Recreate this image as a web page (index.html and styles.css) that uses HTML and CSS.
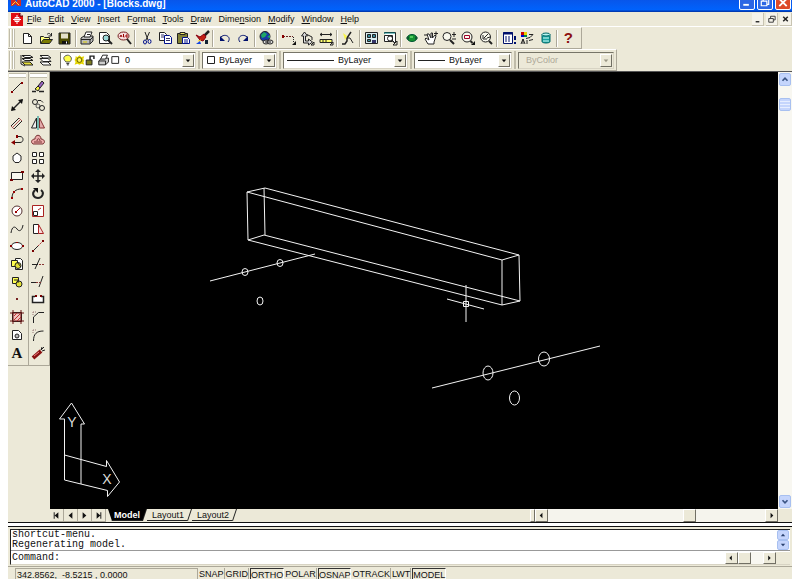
FILE: index.html
```html
<!DOCTYPE html>
<html lang="en">
<head>
<meta charset="utf-8">
<title>AutoCAD 2000 - [Blocks.dwg]</title>
<link rel="stylesheet" href="styles.css">
</head>
<body>
<div class="app">
  <header class="title">
    <svg class="logo" viewBox="0 0 12 12"><path d="M1 3h4l2 4 2-5 3 1v8H8L6 9l-3 2H1z" fill="#d42b20"/><path d="M2 10l4-4 4 4" stroke="#ffe14a" fill="none"/></svg>
    <span class="title-text">AutoCAD 2000 - [Blocks.dwg]</span>
    <div class="wins">
      <button class="win" aria-label="Minimize"><svg viewBox="0 0 14 14"><path d="M3 9.5h6" stroke="#fff" stroke-width="2"/></svg></button>
      <button class="win" aria-label="Restore"><svg viewBox="0 0 14 14"><path d="M5 5V3h6v6H9M3 5.500h6v5H3z" stroke="#fff" stroke-width="1.300" fill="none"/></svg></button>
      <button class="win close" aria-label="Close"><svg viewBox="0 0 14 14"><path d="M3 3l8 8M11 3l-8 8" stroke="#fff" stroke-width="2"/></svg></button>
    </div>
  </header>

  <nav class="menu">
    <svg class="doc" viewBox="0 0 12 13"><path d="M0 0h9l3 3v10H0z" fill="#e00d12"/><path d="M9 0v3h3" fill="#fff" stroke="#500"/><path d="M6 2v9M2 6.500h8M4 4.500h4v4H4z" stroke="#fff" fill="none"/></svg>
    <button><u>F</u>ile</button><button><u>E</u>dit</button><button><u>V</u>iew</button><button><u>I</u>nsert</button><button>F<u>o</u>rmat</button><button><u>T</u>ools</button><button><u>D</u>raw</button><button>Dime<u>n</u>sion</button><button><u>M</u>odify</button><button><u>W</u>indow</button><button><u>H</u>elp</button>
    <div class="mdi">
      <button aria-label="Minimize drawing"><svg viewBox="0 0 12 12"><path d="M4 9h4" stroke="#222" stroke-width="1.500"/></svg></button>
      <button aria-label="Restore drawing"><svg viewBox="0 0 12 12"><path d="M5 5V3h5v4H8M3 5.500h5v4H3z" stroke="#333" fill="none"/></svg></button>
      <button aria-label="Close drawing"><svg viewBox="0 0 12 12"><path d="M3.500 3.500l5 5M8.500 3.500l-5 5" stroke="#222" stroke-width="1.600"/></svg></button>
    </div>
  </nav>

  <div class="bars">
    <div class="bar standard">
      <i class="grip"></i>
      <button class="t" aria-label="New"><svg viewBox="0 0 16 16"><path d="M4.500 3.500h5l3 3v7h-8z" fill="#fff"/><path d="M9.500 3.500v3h3"/></svg></button>
      <button class="t" aria-label="Open"><svg viewBox="0 0 16 16"><path d="M2.500 13V6.500h3l1 1h5v2" fill="#ffff80"/><path d="M2.500 13.500l3-4h9l-3 4z" fill="#7c7c00"/><path d="M9 4.500c2-2 3-1 4 1M13.500 3v3h-3"/></svg></button>
      <button class="t" aria-label="Save"><svg viewBox="0 0 16 16"><path d="M3 3h11v11H3z" fill="#4c4c00"/><path d="M5 3.500h7v5H5z" fill="#e4e1c8" stroke="none"/><path d="M6 11h6v3H6z" fill="#111" stroke="none"/><path d="M10 11.500h1v2h-1z" fill="#fff" stroke="none"/></svg></button>
      <i class="sep"></i>
      <button class="t" aria-label="Print"><svg viewBox="0 0 16 16"><path d="M2 8l3-2h9v5l-3 3H2z" fill="#bbb"/><path d="M5 7l2-5h6l-2 5z" fill="#fff"/><path d="M2 9.500h9v4M11 10l3-3M8 4.500h3"/><path d="M4 12h4" stroke="#dc0"/></svg></button>
      <button class="t" aria-label="Print preview"><svg viewBox="0 0 16 16"><path d="M2.500 2.500h7l3 3v8h-10z" fill="#fff"/><circle cx="9" cy="8" r="3" fill="#9cd8d8"/><path d="M11 10l4 4" stroke-width="2"/></svg></button>
      <button class="t" aria-label="Find and replace"><svg viewBox="0 0 16 16"><ellipse cx="7.500" cy="6" rx="5.500" ry="4" fill="#f6dede" stroke="#722"/><path d="M11 9l4 5" stroke-width="2"/><path d="M4 7l1-2 1 2M7.500 4v3h1M12 5h-2v2h2" stroke="#900"/></svg></button>
      <i class="sep"></i>
      <button class="t" aria-label="Cut"><svg viewBox="0 0 16 16"><path d="M6 2l3 8M10.500 2L7 10"/><ellipse cx="6" cy="12" rx="1.500" ry="2" stroke="#00108c"/><ellipse cx="10.500" cy="11.500" rx="1.500" ry="2" stroke="#00108c"/></svg></button>
      <button class="t" aria-label="Copy"><svg viewBox="0 0 16 16"><path d="M2.500 2.500h5l2 2v6h-7z" fill="#fff"/><path d="M7.500 5.500h5l2 2v6h-7z" fill="#fff" stroke="#00108c"/><path d="M4 5h3M4 7h3M9 8.500h4M9 10.500h4" stroke="#336"/></svg></button>
      <button class="t" aria-label="Paste"><svg viewBox="0 0 16 16"><path d="M2.500 3.500h10v10h-10z" fill="#808036"/><path d="M5 2.500h5v2H5z" fill="#eee36a"/><path d="M7.500 7.500h5l2 2v4h-7z" fill="#fff" stroke="#00108c"/><path d="M9 10h4M9 12h4" stroke="#00108c"/></svg></button>
      <button class="t" aria-label="Match properties"><svg viewBox="0 0 16 16"><path d="M15 1l-5 5" stroke-width="2.500"/><path d="M2 5l4 2 4-3 2 3-3 4-3-1z" fill="#c32114" stroke="#801"/><path d="M2 14l4-3 1 3z" fill="#1446e0" stroke="none"/><path d="M11 10h3v4h-3z" fill="#123" stroke="none"/><path d="M4 11l3-1" stroke="#ffd628"/></svg></button>
      <i class="sep"></i>
      <button class="t" aria-label="Undo"><svg viewBox="0 0 16 16"><path d="M4 7c4-4 11 0 7 5" stroke="#00106c"/><path d="M3 6v5h5z" fill="#00106c" stroke="none"/></svg></button>
      <button class="t" aria-label="Redo"><svg viewBox="0 0 16 16"><path d="M12 7C8 3 1 7 5 12" stroke="#00106c"/><path d="M13 6v5H8z" fill="#00106c" stroke="none"/></svg></button>
      <i class="sep"></i>
      <button class="t" aria-label="Insert hyperlink"><svg viewBox="0 0 16 16"><circle cx="7" cy="6.500" r="5" fill="#1838a8"/><path d="M3 5l3-3 3 2-2 3-3 1zM9 7l3-2v3z" fill="#20a864" stroke="none"/><ellipse cx="8" cy="12" rx="3" ry="2" fill="#ddd"/><ellipse cx="12" cy="12" rx="3" ry="2" fill="#ddd"/><path d="M7 12h6"/></svg></button>
      <i class="sep"></i>
      <button class="t" aria-label="Tracking"><svg viewBox="0 0 16 16"><path d="M2 6.500h10" stroke="#622" stroke-dasharray="2 1"/><path d="M12.500 7v5" stroke-dasharray="1 1"/><path d="M1 5h2v3H1z" fill="#800" stroke="none"/><path d="M15 11v4h-4z" fill="#111" stroke="none"/></svg></button>
      <button class="t" aria-label="UCS"><svg viewBox="0 0 16 16"><path d="M4.500 13V6h-2l3-4 3 4h-2v5h3V9l4 3-4 3v-2z" fill="#ddd"/><path d="M8 4.500l5 2.500v3M15 12v3h-3z"/></svg></button>
      <button class="t" aria-label="Distance"><svg viewBox="0 0 16 16"><path d="M2 4.500h12M4 3L2 4.500 4 6M12 3l2 1.500L12 6"/><path d="M2 9.500h12v3H2z" fill="#ffff70"/><path d="M5 10v2M8 10v2M15 12v3h-3z"/></svg></button>
      <i class="sep"></i>
      <button class="t" aria-label="Redraw all"><svg viewBox="0 0 16 16"><path d="M11 2l-4 6v3l-2 3H2" stroke-width="1.500"/><path d="M3 3l4 3-2 4z" fill="#f8f44a" stroke="none"/><path d="M7 8h3l3 5"/></svg></button>
      <i class="sep"></i>
      <button class="t" aria-label="Aerial view"><svg viewBox="0 0 16 16"><path d="M2.500 2.500h12v11h-12z" fill="#d9eef0"/><path d="M4.500 4.500h3v3h-3zM9.500 4.500h3v3h-3zM4.500 9.500h3v2h-3z" fill="#378b9a"/><path d="M9 10h4v3H9z" fill="#336" stroke="none"/></svg></button>
      <button class="t" aria-label="Named views"><svg viewBox="0 0 16 16"><path d="M2.500 3.500v-1h11v10h-2M2.500 5.500h8v6h-8z" fill="#fff"/><path d="M2 3h11" stroke="#008080"/><circle cx="8" cy="8.500" r="2.500"/><path d="M10 10l2 2M15 11v4h-4z"/></svg></button>
      <i class="sep"></i>
      <button class="t" aria-label="3D orbit"><svg viewBox="0 0 16 16"><ellipse cx="8" cy="8" rx="5" ry="3.500" fill="#149330" stroke="#053"/><path d="M2 8l3-2v4zM14 8l-3-2v4z" fill="#153" stroke="none"/><path d="M6 7h3" stroke="#8fff8a"/></svg></button>
      <button class="t" aria-label="Pan"><svg viewBox="0 0 16 16"><path d="M5 14L2 9l1-1 3 2-2-6h2l2 4V3h1.500v5L12 5l1 1-2 6v2z" fill="#fff"/><path d="M11 3.500h4M13 1.500v4M1 5h3"/></svg></button>
      <button class="t" aria-label="Zoom realtime"><svg viewBox="0 0 16 16"><circle cx="6" cy="6.500" r="4" fill="#f8f8ee"/><path d="M9 10l4 4" stroke-width="2"/><path d="M13 2v5M11 4.500h4M11 9h4"/></svg></button>
      <button class="t" aria-label="Zoom window"><svg viewBox="0 0 16 16"><circle cx="7" cy="7" r="5" fill="#f8f8ee"/><path d="M4.500 5.500h5v3h-5z" stroke="#a00028"/><path d="M10.500 11l2 2" stroke-width="2"/><path d="M15 11v4h-4z" fill="#111" stroke="none"/></svg></button>
      <button class="t" aria-label="Zoom previous"><svg viewBox="0 0 16 16"><circle cx="7.500" cy="7" r="5" fill="#f8f8ee"/><path d="M11 11l3 3" stroke-width="2"/><path d="M10 4L6 8M5 5v4h4M12 7l-3 1"/></svg></button>
      <i class="sep"></i>
      <button class="t" aria-label="Properties"><svg viewBox="0 0 16 16"><path d="M2.500 2.500h9v11h-9z" fill="#fff" stroke="#00106c"/><path d="M2 3.500h10" stroke="#00106c" stroke-width="2"/><path d="M4 7h6M4 9h6M4 11h6" stroke="#00106c" stroke-dasharray="2 1"/><path d="M14 6v4M14 12v2" stroke="#00106c" stroke-width="2"/></svg></button>
      <button class="t" aria-label="DesignCenter"><svg viewBox="0 0 16 16"><path d="M2 2h3v3H2z" fill="#c00" stroke="none"/><path d="M5 2h3v3H5z" fill="#e8d000" stroke="none"/><path d="M2 5h3v2H2z" fill="#00c" stroke="none"/><path d="M5 5h3v2H5z" fill="#084" stroke="none"/><path d="M10 4.500h4l-3 3-4 1M4 9v5M2 14l2-5 2 5M8 10v4M10 10.500l4-1"/></svg></button>
      <button class="t" aria-label="dbConnect"><svg viewBox="0 0 16 16"><path d="M4 4.500v7c0 2 8 2 8 0v-7" fill="#18a3a0" stroke="#066"/><ellipse cx="8" cy="4.500" rx="4" ry="1.500" fill="#b6f4ef" stroke="#066"/><path d="M5 8h6M5 11h6" stroke="#d6fffa"/></svg></button>
      <i class="sep"></i>
      <button class="t help" aria-label="Help">?</button>
    </div>

    <div class="bar props">
      <i class="grip"></i>
      <button class="t" aria-label="Make object's layer current"><svg viewBox="0 0 16 16"><path d="M3 3.500h8l3 2H6zM3 6.500h8l3 2H6z" fill="#fff"/><path d="M3 10h8l3 3H6z" fill="#e6de38"/><path d="M2 3v9l4 2"/></svg></button>
      <button class="t" aria-label="Layers"><svg viewBox="0 0 16 16"><path d="M3 3.500h8l3 2.500H6zM3 6.500h8l3 3H6zM3 10h8l3 3H6z" fill="#fff"/></svg></button>
      <label class="combo layer">
        <svg class="states" viewBox="0 0 62 14">
          <path d="M4 9C-1 4 4 2 6 2s6 3 2 7z" fill="#ffff48" stroke="#555"/><path d="M4.500 10.500h3M5 12h2"/>
          <path d="M14 3l2 1 2-2 2 2 3-1-1 3 1 2-1 1 1 3-3-1-2 1-2-1-3 1 1-3-1-2 1-2z" fill="#e5d600" stroke="none"/><circle cx="18" cy="7" r="2.500" fill="#fff75c" stroke="#665c00"/>
          <path d="M25 7h6v5h-6z" fill="#7a7a20"/><path d="M29 7V3h4v3" stroke-width="1.500"/>
          <path d="M38 8l3-3h7v4l-3 3h-7z" fill="#ccc"/><path d="M40 6l2-4h5l-2 4z" fill="#fff"/><path d="M38 8h7v4"/>
          <path d="M51.500 3.500h7v7h-7z" fill="#fff"/>
        </svg>
        <select aria-label="Layer"><option>0</option></select>
        <svg class="arrow" viewBox="0 0 11 12"><path d="M3 5h5L5.500 8z"/></svg>
      </label>
      <i class="grip slim"></i>
      <label class="combo color">
        <svg class="swatch" viewBox="0 0 12 14"><path d="M3.500 3.500h7v7h-7z" fill="#fff"/></svg>
        <select aria-label="Color"><option>ByLayer</option></select>
        <svg class="arrow" viewBox="0 0 11 12"><path d="M3 5h5L5.500 8z"/></svg>
      </label>
      <i class="grip slim"></i>
      <label class="combo ltype">
        <span class="rule long"></span>
        <select aria-label="Linetype"><option>ByLayer</option></select>
        <svg class="arrow" viewBox="0 0 11 12"><path d="M3 5h5L5.500 8z"/></svg>
      </label>
      <i class="grip slim"></i>
      <label class="combo weight">
        <span class="rule"></span>
        <select aria-label="Lineweight"><option>ByLayer</option></select>
        <svg class="arrow" viewBox="0 0 11 12"><path d="M3 5h5L5.500 8z"/></svg>
      </label>
      <i class="grip slim"></i>
      <label class="combo off">
        <select aria-label="Plot style" disabled><option>ByColor</option></select>
        <svg class="arrow" viewBox="0 0 11 12"><path d="M3 5h5L5.500 8z"/></svg>
      </label>
    </div>
  </div>

  <main class="work">
    <aside class="dock">
      <div class="palette">
        <i class="grip flat"></i>
        <button class="v" aria-label="Line"><svg viewBox="0 0 16 16"><path d="M4 12l8-8"/><path d="M2 12h2v2H2zM12 3h2v2h-2z" fill="#800" stroke="none"/></svg></button>
        <button class="v" aria-label="Construction line"><svg viewBox="0 0 16 16"><path d="M3 13L13 3" stroke-width="1.500"/><path d="M2 14l1-5 4 4zM14 2l-1 5-4-4z" fill="#111" stroke="none"/></svg></button>
        <button class="v" aria-label="Multiline"><svg viewBox="0 0 16 16"><path d="M2 11l8-8M5 14l8-8"/><path d="M2 11l3 3M10 3l3 3M4 12l8-8" stroke="#a55"/></svg></button>
        <button class="v" aria-label="Polyline"><svg viewBox="0 0 16 16"><path d="M8 4.500h3c4 0 4 6 0 6H4"/><path d="M7 3h2v3H7zM6 8v5l-4-2.500z" fill="#800" stroke="none"/></svg></button>
        <button class="v" aria-label="Polygon"><svg viewBox="0 0 16 16"><path d="M8 3l4 3v4l-2 2.500H6L4 10V6z" fill="#fff"/></svg></button>
        <button class="v" aria-label="Rectangle"><svg viewBox="0 0 16 16"><path d="M2.500 4.500h11v7h-11z" fill="#f8f7ee"/><path d="M1 11h3v2H1zM12 3h3v2h-3z" fill="#700" stroke="none"/></svg></button>
        <button class="v" aria-label="Arc"><svg viewBox="0 0 16 16"><path d="M3 13c0-6 4-9 9-9"/><path d="M2 12h2v2H2zM4 6h2v2H4zM12 3h2v2h-2z" fill="#900" stroke="none"/></svg></button>
        <button class="v" aria-label="Circle"><svg viewBox="0 0 16 16"><circle cx="8" cy="8" r="5" fill="#fff" stroke="#533"/><path d="M7 9l4-4" stroke="#a00"/><path d="M6 8h2v2H6z" fill="#900" stroke="none"/></svg></button>
        <button class="v" aria-label="Spline"><svg viewBox="0 0 16 16"><path d="M2 12c1-7 4-7 6-4s5 2 6-4"/></svg></button>
        <button class="v" aria-label="Ellipse"><svg viewBox="0 0 16 16"><ellipse cx="8" cy="8" rx="5.500" ry="3.500" fill="#fff"/><path d="M1 7h2v2H1zM13 7h2v2h-2zM7 4h2v1H7z" fill="#800" stroke="none"/></svg></button>
        <button class="v" aria-label="Insert block"><svg viewBox="0 0 16 16"><path d="M6.500 2.500h5l2 2v9h-7z" fill="#fff"/><path d="M2.500 4.500h6v6h-6z" fill="#ffff50"/><circle cx="9" cy="9.500" r="3" fill="#e4e236"/><path d="M8 6l4 5"/></svg></button>
        <button class="v" aria-label="Make block"><svg viewBox="0 0 16 16"><path d="M3.500 3.500h6v6h-6z" fill="#ffff50"/><circle cx="10" cy="10" r="3" fill="#e4e236"/><path d="M5 6h4v3"/></svg></button>
        <button class="v" aria-label="Point"><svg viewBox="0 0 16 16"><path d="M7 7h2v2H7z" fill="#722" stroke="none"/></svg></button>
        <button class="v" aria-label="Hatch"><svg viewBox="0 0 16 16"><path d="M3.500 3.500h9v9h-9z" fill="#f2c3bf"/><path d="M1 4h14M1 12h14M4 1v14M12 1v14" stroke="#611"/><path d="M5 7l3-3M5 11l6-6M8 12l4-4" stroke="#b33"/></svg></button>
        <button class="v" aria-label="Region"><svg viewBox="0 0 16 16"><path d="M3.500 3.500h6l3 3v6h-9z" fill="#fff"/><circle cx="8" cy="9" r="2" fill="#bbb"/></svg></button>
        <button class="v letter" aria-label="Multiline text">A</button>
      </div>
      <div class="palette">
        <i class="grip flat"></i>
        <button class="v" aria-label="Erase"><svg viewBox="0 0 16 16"><path d="M8 7l4-5 2 2-4 5z" fill="#9a64c4"/><path d="M5 10l3-3 2 2-2 3z" fill="#f5f048"/><path d="M2 12.500h4M9 12.500h5" stroke-width="1.500"/></svg></button>
        <button class="v" aria-label="Copy object"><svg viewBox="0 0 16 16"><circle cx="5" cy="5" r="2.500"/><circle cx="8" cy="9" r="2" stroke="#555"/><circle cx="12" cy="11" r="2.500"/><path d="M8 3.500h3l2 2"/></svg></button>
        <button class="v" aria-label="Mirror"><svg viewBox="0 0 16 16"><path d="M6.500 3v10h-5z" fill="#eee"/><path d="M9.500 3v10h5z" fill="#e2abab" stroke="#833"/><path d="M8 1v14" stroke="#088"/></svg></button>
        <button class="v" aria-label="Offset"><svg viewBox="0 0 16 16"><path d="M3 12c-3-2-1-5 2-5 0-5 6-5 6 0 3 0 5 3 2 5z" fill="#edaaaa" stroke="#733"/><path d="M4 10h8M7 9c0-3 3-3 3 0" stroke="#733"/></svg></button>
        <button class="v" aria-label="Array"><svg viewBox="0 0 16 16"><path d="M2.500 2.500h4v4h-4zM9.500 2.500h4v4h-4zM2.500 9.500h4v4h-4zM9.500 9.500h4v4h-4z" fill="#fff"/></svg></button>
        <button class="v" aria-label="Move"><svg viewBox="0 0 16 16"><path d="M8 3v10M3 8h10" stroke-width="1.500"/><path d="M8 1l3 3H5zM8 15l3-3H5zM1 8l3-3v6zM15 8l-3-3v6z" fill="#222" stroke="none"/></svg></button>
        <button class="v" aria-label="Rotate"><svg viewBox="0 0 16 16"><path d="M5 5C1 9 4 13 8 13s7-5 3-8" stroke-width="2"/><path d="M3 3h5v5z" fill="#111" stroke="none"/></svg></button>
        <button class="v" aria-label="Scale"><svg viewBox="0 0 16 16"><path d="M2.500 2.500h11v11h-11z" fill="#fff" stroke="#a22"/><path d="M3.500 8.500h4v4h-4z"/><path d="M8 7l3-2" stroke="#a22"/></svg></button>
        <button class="v" aria-label="Stretch"><svg viewBox="0 0 16 16"><path d="M3.500 3.500h5v9h-5z" fill="#fff"/><path d="M8.500 3.500l5 9h-5z" fill="#f7dada" stroke="#a22"/></svg></button>
        <button class="v" aria-label="Lengthen"><svg viewBox="0 0 16 16"><path d="M3 13l5-5"/><path d="M8 8l5-5" stroke="#a33" stroke-dasharray="2 1"/><path d="M2 12h2v2H2zM12 2h2v2h-2z" fill="#700" stroke="none"/></svg></button>
        <button class="v" aria-label="Trim"><svg viewBox="0 0 16 16"><path d="M2 8.500h6M5 13l5-11"/><path d="M9 8.500h6" stroke="#833" stroke-dasharray="2 1"/></svg></button>
        <button class="v" aria-label="Extend"><svg viewBox="0 0 16 16"><path d="M1 8.500h5M9 13l4-11"/><path d="M6 8.500h5" stroke="#833" stroke-dasharray="2 1"/></svg></button>
        <button class="v" aria-label="Break"><svg viewBox="0 0 16 16"><path d="M5 5.500H2.500v6h11v-6H11" fill="#fff" stroke-width="1.500"/><path d="M5 4h2v2H5zM10 4h2v2h-2z" fill="#700" stroke="none"/></svg></button>
        <button class="v" aria-label="Chamfer"><svg viewBox="0 0 16 16"><path d="M3.500 14V8l5-4.500H14"/><path d="M3 3h4M3 3v4" stroke="#977" stroke-dasharray="1 1"/></svg></button>
        <button class="v" aria-label="Fillet"><svg viewBox="0 0 16 16"><path d="M3.500 14c0-7 3-10 10-10"/><path d="M3 3h4M3 3v4" stroke="#977" stroke-dasharray="1 1"/></svg></button>
        <button class="v" aria-label="Explode"><svg viewBox="0 0 16 16"><path d="M3 13l8-7" stroke="#811" stroke-width="4"/><path d="M4 11l5-4" stroke="#f08080"/><path d="M11 5l1-3M12 6l3-1M11 5l3-3"/></svg></button>
      </div>
    </aside>

    <section class="view">
      <div class="stage">
        <svg class="drawing" viewBox="50 72 728 436" preserveAspectRatio="xMinYMin meet" role="img" aria-label="Model space drawing">
          <path d="M247 192l18-4 254 67-17 5zM248 240l16-5 256 66-18 4zM247 192l1 48M264 188l1 47M519 255l1 46M502 260v45"/>
          <path d="M210 281l105-27M432 388l168-42M447 299l37 10M466 285v37"/>
          <path d="M463.500 301.500h5v5h-5z"/>
          <ellipse cx="245" cy="272" rx="3" ry="3.500"/><ellipse cx="280" cy="263" rx="3" ry="3.500"/><ellipse cx="260" cy="301" rx="3" ry="4"/>
          <ellipse cx="488" cy="373" rx="5" ry="7"/><ellipse cx="544" cy="359" rx="5.500" ry="7"/><ellipse cx="514.500" cy="398" rx="5" ry="7"/>
          <path d="M64.500 480V419h-5l12-16 13 21h-3.500v60M64.500 455l42 11.500v-6l13 21.500-12 14.500v-6L64.500 480"/>
          <text x="72" y="427">Y</text><text x="107" y="484">X</text>
        </svg>
        <div class="vscroll">
          <button aria-label="Scroll up"><svg viewBox="0 0 12 12"><path d="M3 7.500l3-3 3 3"/></svg></button>
          <span class="thumb"></span>
          <button class="end" aria-label="Scroll down"><svg viewBox="0 0 12 12"><path d="M3 4.500l3 3 3-3"/></svg></button>
        </div>
      </div>
      <div class="foot">
        <div class="steps">
          <button aria-label="First tab"><svg viewBox="0 0 14 12"><path d="M4 3h1v7H4zM9 3v7L5 6.500z"/></svg></button>
          <button aria-label="Previous tab"><svg viewBox="0 0 14 12"><path d="M9 3v7L5 6.500z"/></svg></button>
          <button aria-label="Next tab"><svg viewBox="0 0 14 12"><path d="M5 3v7l4-3.500z"/></svg></button>
          <button aria-label="Last tab"><svg viewBox="0 0 14 12"><path d="M5 3v7l4-3.500zM9 3h1v7H9z"/></svg></button>
        </div>
        <div class="tabs">
          <button class="tab on">Model</button>
          <svg class="edge" viewBox="0 0 5 12"><path d="M0.500 12L4.500 0"/></svg>
          <button class="tab">Layout1</button>
          <svg class="edge" viewBox="0 0 5 12"><path d="M0.500 12L4.500 0"/></svg>
          <button class="tab">Layout2</button>
          <svg class="edge" viewBox="0 0 5 12"><path d="M0.500 12L4.500 0"/></svg>
        </div>
        <div class="hscroll">
          <span class="split"></span>
          <button aria-label="Scroll left"><svg viewBox="0 0 12 12"><path d="M7 3v6L4 6z"/></svg></button>
          <span class="knob"></span>
          <button aria-label="Scroll right"><svg viewBox="0 0 12 12"><path d="M5 3v6l3-3z"/></svg></button>
        </div>
      </div>
    </section>
  </main>

  <div class="divider"></div>

  <section class="command">
    <div class="history">
      <div class="log">shortcut-menu.<br>Regenerating model.</div>
      <div class="mini">
        <button aria-label="History up"><svg viewBox="0 0 10 9"><path d="M2.500 6L5 3l2.500 3z"/></svg></button>
        <button aria-label="History down"><svg viewBox="0 0 10 9"><path d="M2.500 3L5 6l2.500-3z"/></svg></button>
      </div>
    </div>
    <div class="entry">
      <label for="cmd">Command:</label><input id="cmd" type="text">
      <div class="minih">
        <button aria-label="Command left"><svg viewBox="0 0 12 12"><path d="M7 3v6L4 6z"/></svg></button>
        <span class="knob"></span>
        <i></i>
        <button aria-label="Command right"><svg viewBox="0 0 12 12"><path d="M5 3v6l3-3z"/></svg></button>
      </div>
    </div>
  </section>

  <footer class="status">
    <output class="coords">342.8562, &nbsp;-8.5215 , 0.0000</output>
    <button>SNAP</button><button>GRID</button><button class="on">ORTHO</button><button>POLAR</button><button class="on">OSNAP</button><button>OTRACK</button><button>LWT</button><button class="on">MODEL</button>
  </footer>
</div>
</body>
</html>
```

FILE: styles.css
```css
* { box-sizing: border-box; }
html, body { height: 100%; }
body {
  margin: 0;
  padding: 0 8px;
  overflow: hidden;
  background: #fff;
  color: #111;
  font: 9px/12px "Liberation Sans", sans-serif;
}
button, select, input {
  margin: 0;
  padding: 0;
  border: 0;
  border-radius: 0;
  background: none;
  color: inherit;
  font: inherit;
}
svg { display: block; flex: none; }

.app {
  display: flex;
  flex-direction: column;
  height: 100vh;
  background: #ece9d8;
}

/* Title bar */
.title {
  display: flex;
  align-items: flex-start;
  gap: 4px;
  height: 12px;
  padding: 0 1px 0 2px;
  overflow: hidden;
  background: linear-gradient(#0856ea, #0062fc 80%, #0030a0);
  color: #fff;
}
.logo { width: 11px; height: 11px; margin-top: -4px; }
.title-text { flex: 1; font-size: 10px; line-height: 8px; font-weight: bold; white-space: nowrap; }
.wins { display: flex; gap: 2px; margin-top: -5px; }
.win {
  width: 16px;
  height: 15px;
  border: 1px solid #fff;
  border-radius: 2px;
  background: #2d67e4;
}
.win svg { width: 14px; height: 13px; }
.close { background: #dd4a28; }

/* Menu bar */
.menu {
  display: flex;
  align-items: center;
  gap: 7px;
  height: 14px;
  padding-left: 3px;
}
.doc { width: 12px; height: 13px; margin-right: -3px; }
.mdi { display: flex; gap: 2px; margin-left: auto; }
.mdi button {
  width: 12px;
  height: 13px;
  background: #f5f3ea;
  border-right: 1px solid #c8c4b2;
  border-bottom: 1px solid #c8c4b2;
}
.mdi svg { width: 11px; height: 12px; }

/* Toolbars */
.bars {
  display: flex;
  flex-direction: column;
  border-top: 1px solid #fff;
  border-bottom: 1px solid #555;
}
.bar {
  display: flex;
  align-items: center;
  height: 22px;
  border-right: 1px solid #aca899;
  border-bottom: 1px solid #aca899;
  border-top: 1px solid #fff;
}
.standard { width: 574px; padding-right: 3px; justify-content: space-between; }
.props { width: 609px; }
.t { width: 18px; height: 18px; padding: 1px; flex: none; }
.t svg, .v svg { width: 16px; height: 16px; fill: none; stroke: #222; }
.grip {
  flex: none;
  width: 6px;
  height: 18px;
  margin: 0 3px 0 1px;
  border: 1px solid #c0bcaa;
  border-width: 0 1px;
  background: linear-gradient(90deg, #fff 1px, #ece9d8 1px 2px, #c0bcaa 2px 3px, #fff 3px);
}
.grip.slim { width: 2px; margin: 0 2px; background: #f8f7f0; }
.sep {
  width: 2px;
  height: 17px;
  margin: 0 1px;
  border-left: 1px solid #aca899;
  border-right: 1px solid #fff;
}
.help { color: #8c1010; font-size: 15px; font-weight: bold; line-height: 16px; }

.combo {
  display: flex;
  align-items: center;
  height: 17px;
  padding: 1px;
  border: 1px solid #777568;
  border-right-color: #d8d4c4;
  border-bottom-color: #d8d4c4;
  background: #fff;
}
.combo select { flex: 1; min-width: 0; height: 13px; appearance: none; opacity: 1; padding-left: 3px; }
.arrow {
  width: 12px;
  height: 13px;
  border: 1px solid #fff;
  border-right-color: #716f64;
  border-bottom-color: #716f64;
  background: #ece9d8;
  fill: #111;
}
.layer { width: 136px; margin-left: 6px; }
.color { width: 75px; }
.ltype { width: 125px; }
.weight { width: 98px; }
.off { width: 96px; background: #ece9d8; color: #aca899; }
.off select { padding-left: 6px; }
.off .arrow { fill: #999685; }
.states { width: 60px; height: 14px; fill: none; stroke: #222; }
.swatch { width: 12px; height: 14px; fill: none; stroke: #222; }
.rule { width: 27px; height: 1px; margin: 0 1px 0 2px; background: #222; }
.rule.long { width: 47px; }

/* Work area */
.work { display: flex; flex: 1; min-height: 0; }
.dock { display: flex; width: 42px; align-items: flex-start; }
.palette {
  display: flex;
  flex-direction: column;
  align-items: center;
  justify-content: space-between;
  width: 21px;
  height: 294px;
  padding: 0 2px 4px 0;
  border-right: 1px solid #aca899;
  border-bottom: 1px solid #aca899;
}
.grip.flat {
  width: 17px;
  height: 5px;
  margin: 1px 0 0;
  border-width: 1px 0;
  background: #fff;
}
.v { width: 18px; height: 17px; padding: 0 1px; }
.letter { font: bold 15px/16px "Liberation Serif", serif; }

.view { display: flex; flex: 1; flex-direction: column; min-width: 0; }
.stage { display: flex; flex: 1; min-height: 0; background: #000; }
.drawing { flex: 1; min-width: 0; height: 100%; fill: none; stroke: #f4f4f4; stroke-width: 1; }
.drawing text { fill: #ddd; stroke: none; font-size: 14px; text-anchor: middle; }
.vscroll {
  display: flex;
  flex-direction: column;
  width: 14px;
  padding: 1px;
  background: #f8f7f1;
}
.vscroll button, .thumb, .mini button {
  border: 1px solid #a8c0f0;
  border-radius: 2px;
  background: #c5d5fc;
}
.vscroll button { width: 12px; height: 13px; }
.vscroll svg { width: 10px; height: 11px; fill: none; stroke: #3c5584; stroke-width: 2; }
.thumb {
  height: 13px;
  margin-top: 12px;
  background: repeating-linear-gradient(#c5d5fc 0 2px, #e7eeff 2px 3px);
}
.end { margin-top: auto; }

.foot { display: flex; height: 13px; padding-right: 14px; background: #ece9d8; }
.steps { display: flex; }
.steps button { width: 14px; height: 13px; border-right: 1px solid #aca899; border-bottom: 1px solid #aca899; }
.steps svg { width: 13px; height: 12px; fill: #111; }
.tabs { display: flex; padding-left: 2px; }
.tab { height: 12px; padding: 0 3px 0 5px; line-height: 12px; border-bottom: 1px solid #222; }
.tab.on {
  padding: 0 2px 0 6px;
  background: #000;
  color: #fff;
  font-weight: bold;
  clip-path: polygon(0 0, 100% 0, 100% 100%, 4px 100%);
}
.edge { width: 5px; height: 12px; fill: none; stroke: #222; }
.tab.on + .edge { background: linear-gradient(108deg, #000 50%, #ece9d8 50%); }
.hscroll { display: flex; width: 248px; margin-left: auto; background: #f5f4ed; }
.hscroll button, .knob, .split, .minih button {
  border: 1px solid #fff;
  border-right-color: #716f64;
  border-bottom-color: #716f64;
  background: #ece9d8;
}
.hscroll button, .hscroll .knob { width: 13px; height: 13px; }
.hscroll svg { width: 11px; height: 11px; fill: #111; }
.hscroll .knob { margin: 0 69px 0 auto; }
.split { width: 5px; }

.divider {
  height: 5px;
  border: 1px solid #111;
  border-width: 1px 0;
  background: #fff;
}

/* Command window */
.command {
  margin: 2px 2px 0;
  border: 1px solid #222;
  border-right: 0;
  border-bottom-color: #d8d4c4;
  background: #fff;
  font: 10px/10px "Liberation Mono", monospace;
}
.history { display: flex; justify-content: space-between; height: 21px; border-bottom: 1px solid #999; }
.log { padding-left: 1px; }
.mini { display: flex; flex-direction: column; width: 13px; padding-right: 1px; }
.mini button { width: 12px; height: 10px; }
.mini svg { width: 10px; height: 8px; fill: #28406e; }
.entry { display: flex; align-items: center; height: 13px; padding-left: 1px; }
.entry input { flex: 1; min-width: 0; height: 12px; outline: 0; }
.minih { display: flex; width: 65px; height: 12px; padding-right: 14px; background: #ece9d8; }
.minih button, .minih .knob { width: 13px; height: 12px; flex: none; }
.minih svg { width: 10px; height: 10px; fill: #111; }
.minih i { flex: 1; background: #f8f7f1; }

/* Status bar */
.status {
  display: flex;
  gap: 1px;
  height: 13px;
  margin-top: 1px;
  padding: 1px 0 0 7px;
  overflow: hidden;
  border-top: 1px solid #aca899;
}
.coords {
  width: 183px;
  height: 12px;
  padding-left: 1px;
  border: 1px solid #aca899;
  border-bottom: 0;
}
.status button { height: 12px; border-right: 1px solid #aca899; }
.status button.on { border: 1px solid #333; border-right-color: #fff; border-bottom: 0; }
```
